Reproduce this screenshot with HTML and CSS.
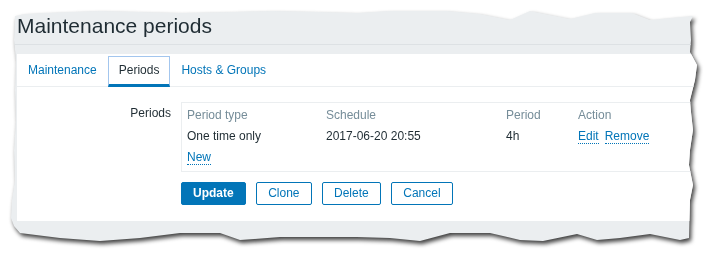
FILE: index.html
```html
<!DOCTYPE html>
<html lang="en">

<head>
    <meta charset="UTF-8">
    <meta name="viewport" content="width=device-width, initial-scale=1.0">
    <title>Maintenance periods</title>
    <link rel="stylesheet" href="styles.css">
</head>

<body>
    <div class="sheet">
        <div class="page">
            <header class="header">
                <h1 class="title">Maintenance periods</h1>
            </header>
            <div class="content">
                <ul class="tabs">
                    <li><a href="#" class="tab">Maintenance</a></li>
                    <li><a href="#" class="tab tab-active">Periods</a></li>
                    <li><a href="#" class="tab">Hosts &amp; Groups</a></li>
                </ul>
                <form class="form">
                    <label class="form-label">Periods</label>
                    <div class="periods">
                        <table class="periods-table">
                            <colgroup>
                                <col style="width: 139px">
                                <col style="width: 180px">
                                <col style="width: 72px">
                                <col>
                            </colgroup>
                            <thead>
                                <tr>
                                    <th>Period type</th>
                                    <th>Schedule</th>
                                    <th>Period</th>
                                    <th>Action</th>
                                </tr>
                            </thead>
                            <tbody>
                                <tr>
                                    <td>One time only</td>
                                    <td>2017-06-20 20:55</td>
                                    <td>4h</td>
                                    <td><a href="#" class="link-action">Edit</a><a href="#" class="link-action link-gap">Remove</a></td>
                                </tr>
                                <tr>
                                    <td colspan="4"><a href="#" class="link-action">New</a></td>
                                </tr>
                            </tbody>
                        </table>
                    </div>
                    <div class="buttons">
                        <button type="button" class="btn btn-main">Update</button>
                        <button type="button" class="btn">Clone</button>
                        <button type="button" class="btn">Delete</button>
                        <button type="button" class="btn">Cancel</button>
                    </div>
                </form>
            </div>
        </div>
    </div>
</body>

</html>
```

FILE: styles.css
```css
* {
    margin: 0;
    padding: 0;
    box-sizing: border-box;
}

body {
    background-color: #fff;
    font-family: 'Liberation Sans', Arial, sans-serif;
    font-size: 12px;
    color: #1f2c33;
}

/* torn paper edge */
.sheet {
    width: 717px;
    height: 261px;
    filter: drop-shadow(2px 3px 2px rgba(0, 0, 0, 0.75));
}

.page {
    width: 717px;
    height: 261px;
    background-color: #ebeef0;
    overflow: hidden;
    clip-path: polygon(15px 16px, 25px 14px, 45px 13px, 70px 12px, 100px 11px, 140px 12px, 180px 13px, 230px 12px, 273px 11px, 320px 12px, 357px 13px, 390px 11px, 447px 11px, 480px 14px, 510px 20px, 530px 11px, 550px 15px, 570px 19px, 595px 13px, 632px 13px, 650px 20px, 670px 18px, 693px 16px,
        690px 22px, 691px 40px, 690px 52px, 697px 65px, 695px 80px, 690px 100px, 691px 112px, 693px 130px, 690px 150px, 689px 165px, 693px 185px, 690px 200px, 689px 238px,
        680px 240px, 650px 234px, 620px 238px, 597px 240px, 577px 234px, 543px 241px, 520px 240px, 490px 233px, 450px 233px, 420px 241px, 390px 238px, 357px 237px, 320px 237px, 280px 237px, 240px 240px, 220px 233px, 180px 233px, 140px 238px, 100px 241px, 60px 238px, 20px 233px, 14px 226px,
        11px 218px, 12px 200px, 15px 180px, 14px 150px, 16px 120px, 15px 90px, 16px 60px, 14px 40px, 15px 20px);
}

.header {
    padding: 14px 0 6px 17px;
    border-bottom: 1px solid #dde1e4;
    margin-bottom: 9px;
}

.title {
    font-size: 21px;
    font-weight: normal;
    line-height: 24px;
    color: #1f2c33;
}

.content {
    margin-left: 17px;
    width: 700px;
    background-color: #fff;
    padding-bottom: 16px;
}

.tabs {
    display: flex;
    list-style-type: none;
    padding-top: 2px;
    border-bottom: 1px solid #ebeef0;
}

.tabs li {
    margin-bottom: -1px;
}

.tab {
    display: block;
    padding: 0 10px;
    line-height: 27px;
    border: 1px solid transparent;
    border-bottom-width: 3px;
    color: #0275b8;
    text-decoration: none;
}

.tab-active {
    color: #1f2c33;
    border-color: #a3c6ee;
    border-bottom-color: #0275b8;
}

.form {
    display: grid;
    grid-template-columns: 154px 1fr;
    column-gap: 10px;
    row-gap: 10px;
    padding-top: 15px;
}

.form-label {
    text-align: right;
    line-height: 15px;
    padding-top: 4px;
}

.periods {
    border: 1px solid #ebeef0;
    padding: 2px 0 3px;
}

.periods-table {
    width: 100%;
    border-collapse: collapse;
    table-layout: fixed;
}

.periods-table th,
.periods-table td {
    padding: 3px 5px;
    line-height: 15px;
    text-align: left;
    white-space: nowrap;
}

.periods-table th {
    font-weight: normal;
    color: #768d99;
}

.link-action {
    color: #0275b8;
    text-decoration: none;
    border-bottom: 1px dotted #0275b8;
}

.link-gap {
    margin-left: 6px;
}

.buttons {
    grid-column: 2;
    display: flex;
    gap: 10.5px;
}

.btn {
    height: 23px;
    padding: 0 11px;
    font-family: inherit;
    font-size: 12px;
    line-height: 21px;
    color: #0275b8;
    background-color: #fff;
    border: 1px solid #0275b8;
    border-radius: 2px;
    cursor: pointer;
}

.btn-main {
    color: #fff;
    background-color: #0275b8;
    font-weight: bold;
}
```
